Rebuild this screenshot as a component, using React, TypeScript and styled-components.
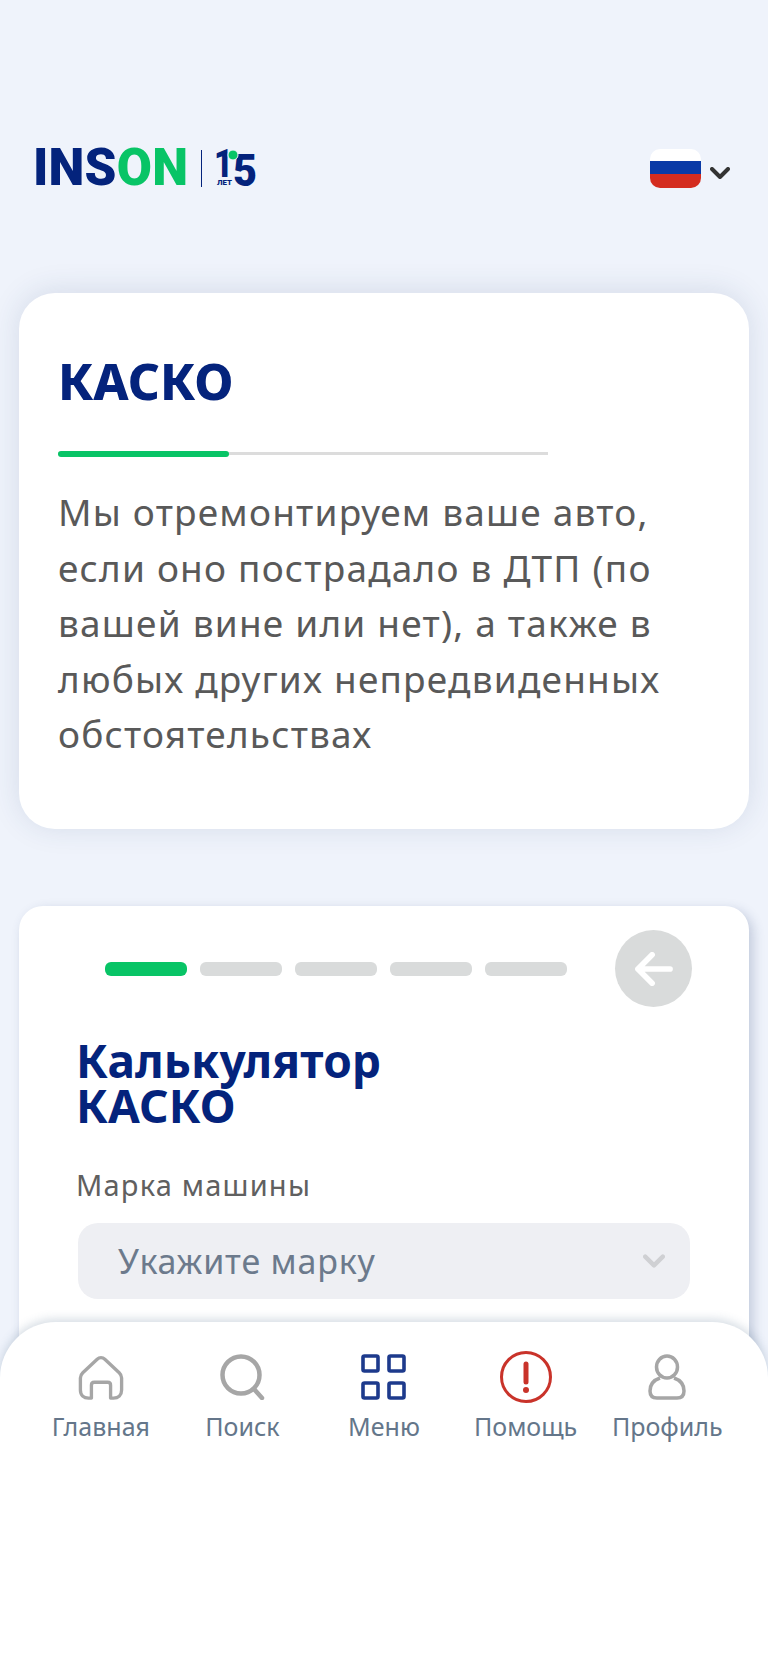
import React from "react";
import styled, { createGlobalStyle } from "styled-components";

const GlobalStyle = createGlobalStyle`
  html, body {
    margin: 0;
    padding: 0;
    height: 100%;
    background: #eff3fb;
    font-family: "Noto Sans", "Open Sans", sans-serif;
  }
`;

const Page = styled.div`
  position: relative;
  width: 768px;
  height: 1670px;
  overflow: hidden;
  background: #eff3fb;
`;

const Header = styled.header`
  display: flex;
  align-items: center;
  justify-content: space-between;
  height: 40px;
  padding: 148px 38px 0 33px;
`;

const Logo = styled.div`
  display: flex;
  align-items: center;
  height: 40px;
`;

const LogoWord = styled.div`
  width: 153px;
  font-family: Roboto, sans-serif;
  font-size: 51px;
  font-weight: 900;
  line-height: 40px;
  letter-spacing: 0.2px;
  color: #04237c;
  white-space: nowrap;
`;

const LogoGreen = styled.span`
  color: #08c466;
`;

const LogoDivider = styled.div`
  width: 1px;
  height: 37px;
  margin: 0 11px 0 15px;
  background: #04237c;
`;

const LangPicker = styled.div`
  display: flex;
  align-items: center;
  gap: 9px;
`;

const ChevronSlot = styled.div`
  display: flex;
  margin-top: 9px;
`;

const Flag = styled.div`
  display: flex;
  flex-direction: column;
  width: 51px;
  height: 39px;
  border-radius: 10px;
  overflow: hidden;
`;

const Stripe = styled.div<{ $color: string; $h: number }>`
  height: ${(p) => p.$h}px;
  background: ${(p) => p.$color};
`;

const Card = styled.section<{ $radius: number }>`
  margin: 0 19px;
  background: #fff;
  border-radius: ${(p) => p.$radius}px;
`;

const IntroCard = styled(Card)`
  margin-top: 105px;
  height: 536px;
  padding: 63px 39px 0;
  box-sizing: border-box;
  box-shadow: 0 -2px 30px rgba(40, 60, 110, 0.13);
`;

const IntroTitle = styled.h1`
  margin: 0;
  font-size: 50px;
  font-weight: 800;
  line-height: 50px;
  color: #04237c;
`;

const Track = styled.div`
  position: relative;
  width: 490px;
  height: 3px;
  margin-top: 46px;
  background: #dcdcdc;
`;

const TrackFill = styled.div`
  position: absolute;
  left: 0;
  top: -1px;
  width: 171px;
  height: 6px;
  border-radius: 3px;
  background: #08c466;
`;

const IntroText = styled.p`
  margin: 29px 0 0;
  width: 650px;
  font-size: 37px;
  line-height: 55.5px;
  letter-spacing: 1.2px;
  font-weight: 400;
  color: #595959;
  white-space: nowrap;
`;

const CalcCard = styled(Card)`
  margin-top: 77px;
  height: 600px;
  padding: 24px 57px 0 58px;
  box-sizing: border-box;
  box-shadow: 4px 4px 12px rgba(50, 70, 120, 0.24);
`;

const StepsRow = styled.div`
  display: flex;
  align-items: center;
  justify-content: space-between;
`;

const Steps = styled.div`
  display: flex;
  gap: 13px;
  margin-left: 28px;
`;

const Step = styled.div<{ $active?: boolean }>`
  width: 82px;
  height: 14px;
  border-radius: 6px;
  background: ${(p) => (p.$active ? "#08c466" : "#d9dbdb")};
`;

const BackButton = styled.div`
  display: flex;
  align-items: center;
  justify-content: center;
  width: 77px;
  height: 77px;
  border-radius: 50%;
  background: #d9dbdb;
`;

const CalcTitle = styled.h2`
  margin: 31px 0 0 -1px;
  font-size: 46px;
  font-weight: 700;
  line-height: 45px;
  letter-spacing: 0.1px;
  color: #04237c;
`;

const FieldLabel = styled.div`
  margin: 37px 0 0 -1px;
  font-size: 29px;
  line-height: 40px;
  letter-spacing: 1.2px;
  color: #606060;
`;

const Select = styled.div`
  display: flex;
  align-items: center;
  justify-content: space-between;
  height: 76px;
  margin: 18px 2px 0 1px;
  padding: 0 25px 0 40px;
  border-radius: 20px;
  background: #eeeff3;
  font-size: 34px;
  letter-spacing: 0.8px;
  color: #6c7a8c;
`;

const BottomNav = styled.nav`
  position: absolute;
  left: 0;
  right: 0;
  top: 1322px;
  bottom: 0;
  display: grid;
  grid-template-columns: repeat(5, 1fr);
  align-items: start;
  padding: 28px 30px 0;
  border-radius: 56px 56px 0 0;
  background: #fff;
  box-shadow: 0 -3px 10px rgba(70, 100, 130, 0.22);
`;

const NavItem = styled.div`
  display: flex;
  flex-direction: column;
  align-items: center;
`;

const IconSlot = styled.div`
  display: flex;
  align-items: center;
  justify-content: center;
  height: 54px;
`;

const NavLabel = styled.span`
  margin-top: 6px;
  font-size: 25px;
  line-height: 32px;
  color: #64768a;
  white-space: nowrap;
`;

const Chevron = ({ color, w, h, sw }: { color: string; w: number; h: number; sw: number }) => (
  <svg width={w} height={h} viewBox="0 0 20 12" fill="none">
    <path d="M2 2l8 8 8-8" stroke={color} strokeWidth={sw} strokeLinecap="round" strokeLinejoin="round" />
  </svg>
);

const AnniversaryMark = () => (
  <svg width="44" height="40" viewBox="0 0 44 40" overflow="visible" fontFamily="Roboto, sans-serif" fontWeight="900" fill="#04237c">
    <text x="1" y="29" fontSize="38" textLength="19" lengthAdjust="spacingAndGlyphs">1</text>
    <text x="20" y="38" fontSize="44" textLength="24" lengthAdjust="spacingAndGlyphs">5</text>
    <text x="4" y="37" fontSize="7.5" textLength="15" lengthAdjust="spacingAndGlyphs">ЛЕТ</text>
    <circle cx="20" cy="7" r="5" fill="#08c466" stroke="#eff3fb" strokeWidth="1" />
  </svg>
);

const HomeIcon = () => (
  <svg width="46" height="45" viewBox="0 0 48 46" fill="none" stroke="#a6a6a6" strokeWidth="3.500" strokeLinejoin="round" strokeLinecap="round">
    <path d="M5 18L20 4c2.400-2.200 5.600-2.200 8 0l15 14c1.500 1.400 2.500 3 2.500 5.500V36c0 5.500-3.500 8.500-8.500 8.500h-3V31c0-2-1-3-3-3H17c-2 0-3 1-3 3v13.500h-3c-5 0-8.500-3-8.500-8.500V23.500C2.500 21 3.500 19.400 5 18z" />
  </svg>
);

const SearchIcon = () => (
  <svg width="46" height="46" viewBox="0 0 46 46" fill="none" stroke="#a6a6a6" strokeLinecap="round">
    <circle cx="22" cy="21" r="18.500" strokeWidth="4.500" />
    <path d="M35 35l8 9" strokeWidth="4.500" />
  </svg>
);

const GridIcon = () => (
  <svg width="46" height="46" viewBox="0 0 46 46" fill="none" stroke="#1d3a8c" strokeWidth="3.600">
    <rect x="2" y="2" width="15" height="15" rx="1.500" />
    <rect x="28" y="2" width="15" height="15" rx="1.500" />
    <rect x="2" y="29" width="15" height="15" rx="1.500" />
    <rect x="28" y="29" width="15" height="15" rx="1.500" />
  </svg>
);

const AlertIcon = () => (
  <svg width="54" height="54" viewBox="0 0 54 54" fill="none">
    <circle cx="27" cy="27" r="24.500" stroke="#c9332a" strokeWidth="3" />
    <path d="M27 14v18" stroke="#c9332a" strokeWidth="5" strokeLinecap="round" />
    <circle cx="27" cy="40" r="3" fill="#c9332a" />
  </svg>
);

const ProfileIcon = () => (
  <svg width="38" height="46" viewBox="0 0 38 46" fill="none" stroke="#a6a6a6" strokeWidth="3.500">
    <ellipse cx="19" cy="13" rx="10.500" ry="11" />
    <path d="M12 24C6 26 2 30 2 37c0 5 3 7 7 7h20c4 0 7-2 7-7 0-7-4-11-10-13" strokeLinejoin="round" />
  </svg>
);

const navItems = [
  { label: "Главная", icon: <HomeIcon /> },
  { label: "Поиск", icon: <SearchIcon /> },
  { label: "Меню", icon: <GridIcon /> },
  { label: "Помощь", icon: <AlertIcon /> },
  { label: "Профиль", icon: <ProfileIcon /> },
];

const App = () => (
  <Page>
    <GlobalStyle />
    <Header>
      <Logo>
        <LogoWord>
          INS<LogoGreen>ON</LogoGreen>
        </LogoWord>
        <LogoDivider />
        <AnniversaryMark />
      </Logo>
      <LangPicker>
        <Flag>
          <Stripe $color="#fff" $h={12} />
          <Stripe $color="#0a3aa6" $h={13} />
          <Stripe $color="#d42c1f" $h={14} />
        </Flag>
        <ChevronSlot>
          <Chevron color="#333" w={20} h={12} sw={4} />
        </ChevronSlot>
      </LangPicker>
    </Header>

    <IntroCard $radius={36}>
      <IntroTitle>КАСКО</IntroTitle>
      <Track>
        <TrackFill />
      </Track>
      <IntroText>
        Мы отремонтируем ваше авто,
        <br />
        если оно пострадало в ДТП (по
        <br />
        вашей вине или нет), а также в
        <br />
        любых других непредвиденных
        <br />
        обстоятельствах
      </IntroText>
    </IntroCard>

    <CalcCard $radius={24}>
      <StepsRow>
        <Steps>
          <Step $active />
          <Step />
          <Step />
          <Step />
          <Step />
        </Steps>
        <BackButton>
          <svg width="40" height="34" viewBox="0 0 42 36" fill="none" stroke="#fff" strokeWidth="6" strokeLinecap="round" strokeLinejoin="round">
            <path d="M38 18H4M19 3L4 18l15 15" />
          </svg>
        </BackButton>
      </StepsRow>
      <CalcTitle>
        Калькулятор
        <br />
        КАСКО
      </CalcTitle>
      <FieldLabel>Марка машины</FieldLabel>
      <Select>
        Укажите марку
        <Chevron color="#cfd0d3" w={22} h={14} sw={4} />
      </Select>
    </CalcCard>

    <BottomNav>
      {navItems.map((item) => (
        <NavItem key={item.label}>
          <IconSlot>{item.icon}</IconSlot>
          <NavLabel>{item.label}</NavLabel>
        </NavItem>
      ))}
    </BottomNav>
  </Page>
);

export default App;
